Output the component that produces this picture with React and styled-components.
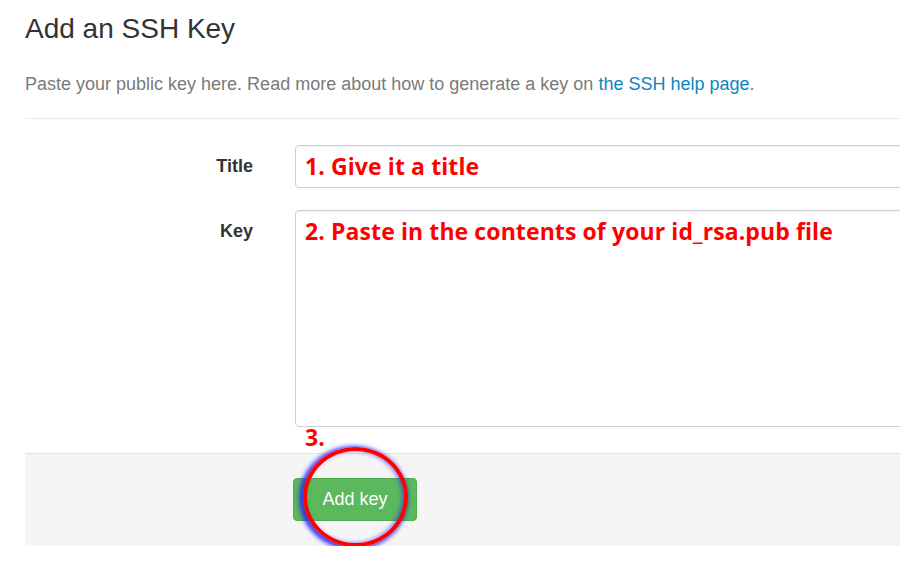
import React from "react";
import styled, { createGlobalStyle } from "styled-components";

const Global = createGlobalStyle`
  html, body { margin: 0; padding: 0; background: #fff; overflow: hidden; }
  body { font-family: "Liberation Sans", Arial, Helvetica, sans-serif; }
`;

const Page = styled.div`
  width: 1200px;
  padding: 13px 0 0 25px;
  box-sizing: border-box;
`;

const Heading = styled.h2`
  margin: 0;
  font-size: 28px;
  line-height: 32px;
  font-weight: 400;
  color: #333;
`;

const Lead = styled.p`
  margin: 27px 0 0;
  font-size: 18px;
  line-height: 24px;
  color: #7a7a7a;
`;

const HelpLink = styled.a`
  color: #0a85c2;
  text-decoration: none;
`;

const Divider = styled.hr`
  margin: 22px 0 0;
  border: 0;
  border-top: 1px solid #eaeaea;
`;

const Form = styled.form`
  margin-top: 26px;
  display: flex;
  flex-direction: column;
  gap: 22px;
`;

const Row = styled.div`
  display: grid;
  grid-template-columns: 228px 1fr;
  column-gap: 42px;
  align-items: start;
`;

const Label = styled.label`
  text-align: right;
  font-size: 18px;
  line-height: 24px;
  font-weight: 700;
  color: #333;
  padding-top: ${(p) => p.$offset}px;
`;

const Field = styled.div`
  height: ${(p) => p.$height}px;
  box-sizing: border-box;
  border: 1px solid #cfcfcf;
  border-radius: 4px;
  padding: 7px 9px;
  background: #fff;
  box-shadow: inset 0 1px 1px rgba(0, 0, 0, 0.05);
`;

const Note = styled.span`
  font-family: "Open Sans", "Noto Sans", sans-serif;
  font-weight: 700;
  font-size: 23px;
  line-height: 1.2;
  letter-spacing: 0.1px;
  color: #ff0000;
`;

const Footer = styled.div`
  margin-top: 26px;
  background: #f5f5f5;
  border-top: 1px solid #e3e3e3;
  padding: 24px 0 25px;
  display: grid;
  grid-template-columns: 228px 1fr;
  column-gap: 40px;
`;

const ButtonCell = styled.div`
  grid-column: 2;
  position: relative;
  width: 124px;
`;

const AddButton = styled.button`
  width: 124px;
  height: 43px;
  background: #5cb85c;
  border: 1px solid #4cae4c;
  border-radius: 4px;
  color: #fff;
  font-family: "Liberation Sans", Arial, sans-serif;
  font-size: 18px;
  padding: 0;
`;

const StepThree = styled(Note)`
  position: absolute;
  left: 12px;
  top: -54px;
`;

const Ring = styled.div`
  position: absolute;
  left: 10px;
  top: -31px;
  width: 105px;
  height: 100px;
  box-sizing: border-box;
  border: 4px solid #ff0000;
  border-radius: 50%;
  box-shadow: -2px 1px 4px 2px rgba(40, 40, 255, 0.9),
    inset -2px 0 4px rgba(40, 40, 255, 0.6);
  pointer-events: none;
`;

export default function App() {
  return (
    <>
      <Global />
      <Page>
        <Heading>Add an SSH Key</Heading>
        <Lead>
          Paste your public key here. Read more about how to generate a key on{" "}
          <HelpLink href="#">the SSH help page</HelpLink>.
        </Lead>
        <Divider />
        <Form>
          <Row>
            <Label $offset={9}>Title</Label>
            <Field $height={43}>
              <Note>1. Give it a title</Note>
            </Field>
          </Row>
          <Row>
            <Label $offset={9}>Key</Label>
            <Field $height={217}>
              <Note>2. Paste in the contents of your id_rsa.pub file</Note>
            </Field>
          </Row>
        </Form>
        <Footer>
          <ButtonCell>
            <StepThree>3.</StepThree>
            <AddButton type="button">Add key</AddButton>
            <Ring />
          </ButtonCell>
        </Footer>
      </Page>
    </>
  );
}
